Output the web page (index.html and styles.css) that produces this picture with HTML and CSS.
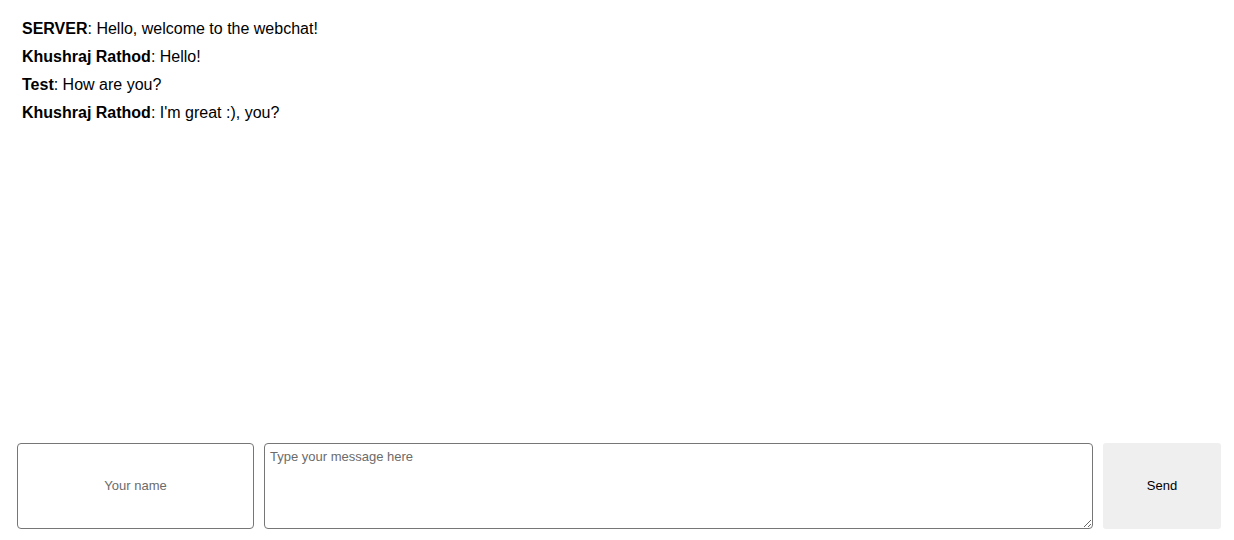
FILE: index.html
```html
<!DOCTYPE html>
<html>
<head>
<meta charset="utf-8">
<link rel="stylesheet" href="styles.css">
</head>
<body>
<div class="app">
  <ul class="messages">
    <li><b>SERVER</b>: Hello, welcome to the webchat!</li>
    <li><b>Khushraj Rathod</b>: Hello!</li>
    <li><b>Test</b>: How are you?</li>
    <li><b>Khushraj Rathod</b>: I'm great :), you?</li>
  </ul>
  <form class="composer">
    <input class="name" type="text" placeholder="Your name">
    <textarea class="msg" placeholder="Type your message here"></textarea>
    <button class="send" type="button">Send</button>
  </form>
</div>
</body>
</html>
```
FILE: styles.css
```css
html, body {
  margin: 0;
  padding: 0;
  background: #fff;
}
body {
  font-family: "Liberation Sans", Arial, sans-serif;
  color: #000;
}
.app {
  height: 540px;
  display: flex;
  flex-direction: column;
  box-sizing: border-box;
}
.messages {
  list-style: none;
  margin: 0;
  padding: 15px 22px 0;
  flex: 1;
  font-size: 16px;
  line-height: 28px;
}
.messages b {
  font-weight: bold;
}
.composer {
  display: flex;
  gap: 10px;
  padding: 0 13px 11px 17px;
  height: 86px;
  margin: 0;
}
.name, .msg, .send {
  box-sizing: border-box;
  height: 86px;
  font-family: "Liberation Sans", Arial, sans-serif;
  font-size: 13px;
  margin: 0;
}
.name {
  width: 237px;
  border: 1px solid #767676;
  border-radius: 4px;
  text-align: center;
  padding: 0 4px 2px;
  color: #000;
}
.msg {
  flex: 1;
  border: 1px solid #767676;
  border-radius: 4px;
  padding: 5px 5px;
  resize: both;
}
.name::placeholder, .msg::placeholder {
  color: #6b6b6b;
}
.send {
  width: 118px;
  border: none;
  border-radius: 3px;
  background: #efefef;
  color: #000;
  padding: 0 6px 2px;
}
```
